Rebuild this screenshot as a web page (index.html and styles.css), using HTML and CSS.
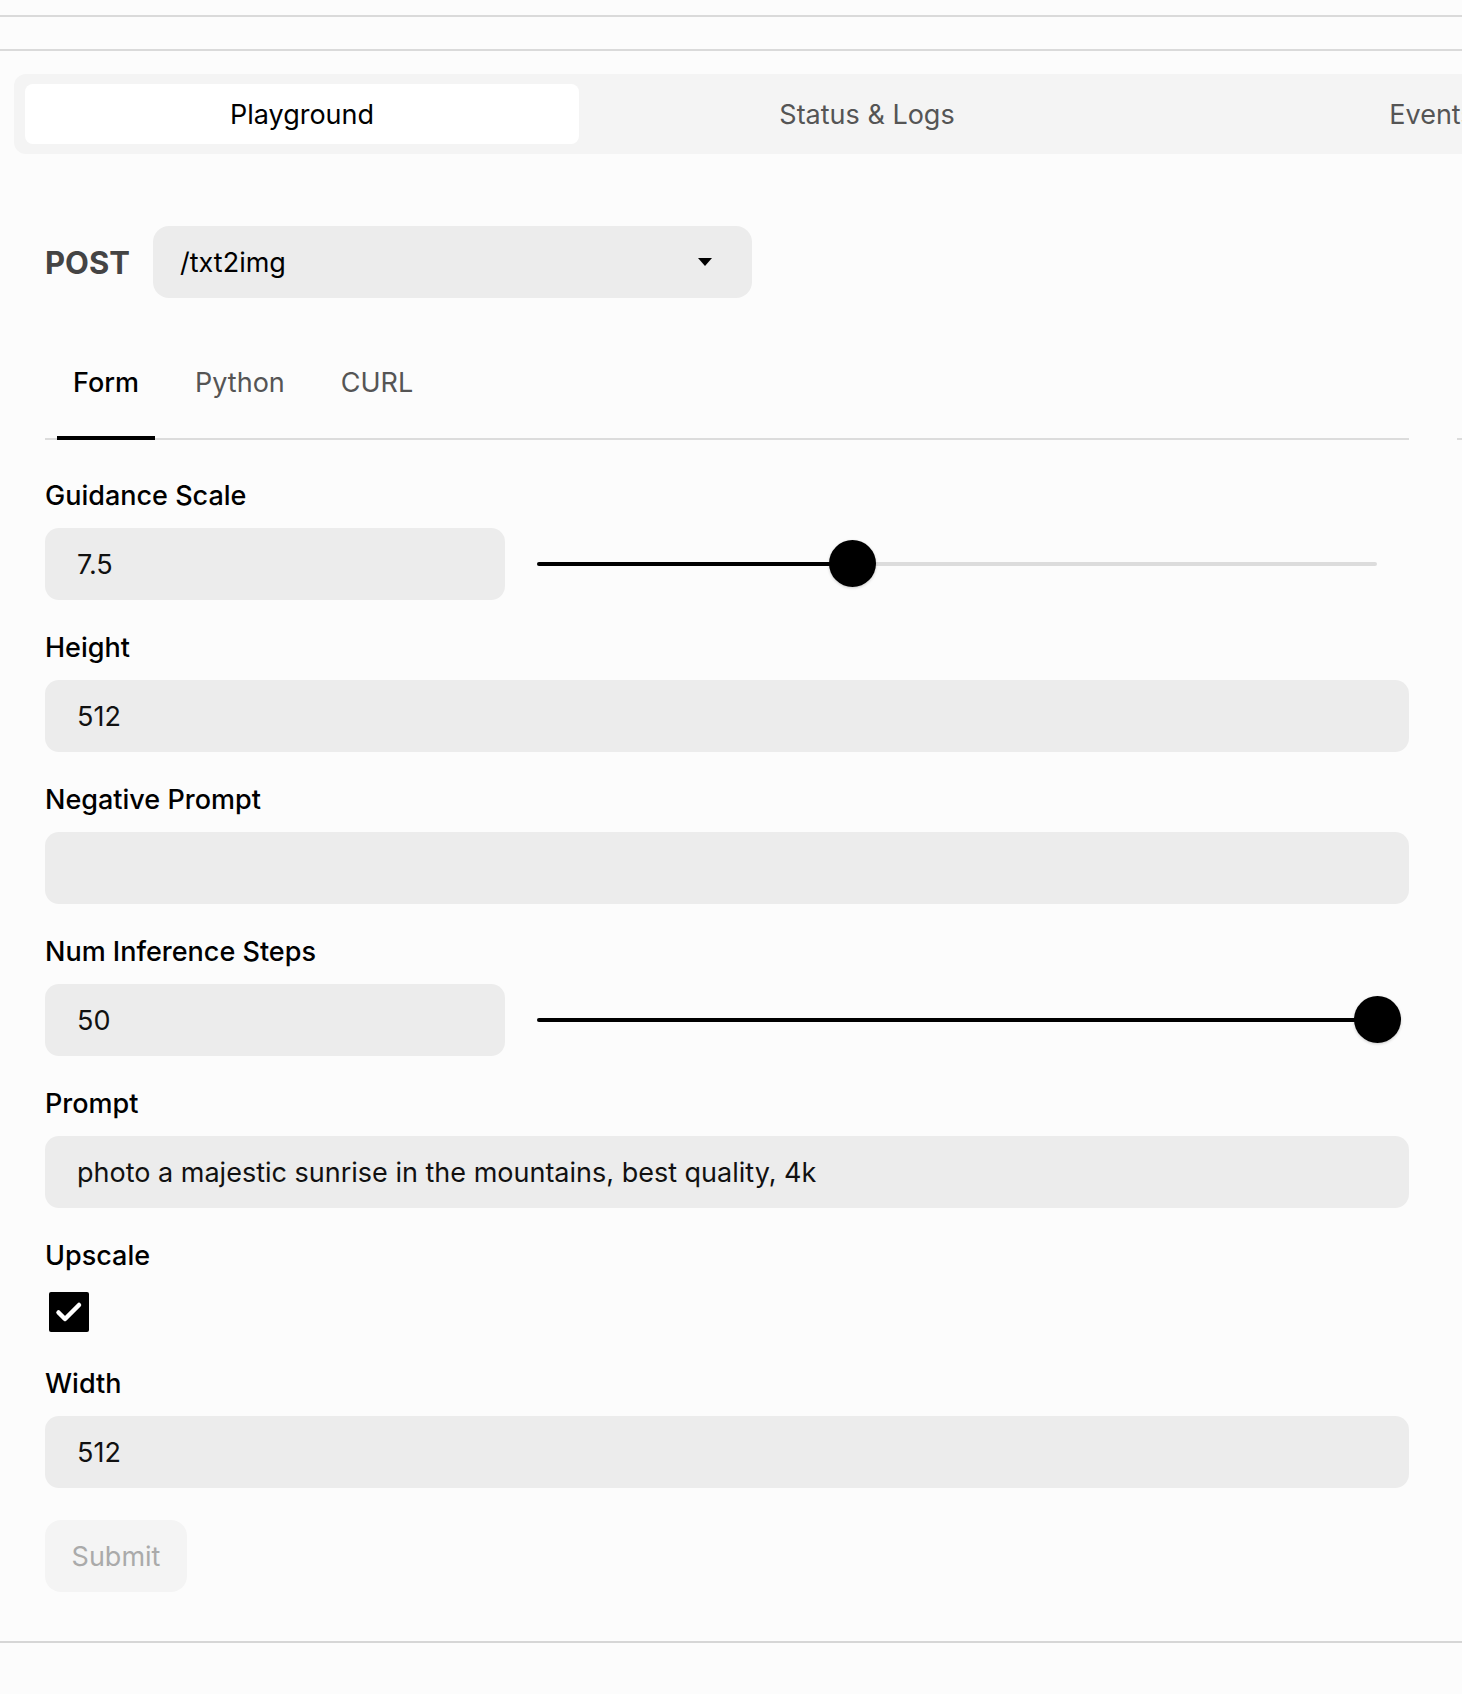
FILE: index.html
```html
<!DOCTYPE html>
<html lang="en">
<head>
<meta charset="utf-8">
<title>Playground</title>
<link rel="stylesheet" href="styles.css">
</head>
<body>
<div class="rule-top"></div>
<div class="rule-head"></div>
<div class="tabbar">
  <div class="tab active">Playground</div>
  <div class="tab">Status &amp; Logs</div>
  <div class="tab">Events</div>
</div>
<div class="columns">
  <div class="left">
    <div class="endpoint">
      <span class="method">POST</span>
      <div class="select"><span>/txt2img</span><span class="caret"></span></div>
    </div>
    <div class="subtabs">
      <div class="subtab active">Form</div>
      <div class="subtab">Python</div>
      <div class="subtab">CURL</div>
    </div>
    <div class="form">
      <div class="field">
        <div class="label">Guidance Scale</div>
        <div class="row">
          <div class="input half">7.5</div>
          <div class="slider">
            <div class="track"><div class="fill" style="width:37.5%"></div></div>
            <div class="thumb" style="left:37.5%"></div>
          </div>
        </div>
      </div>
      <div class="field">
        <div class="label">Height</div>
        <div class="input">512</div>
      </div>
      <div class="field">
        <div class="label">Negative Prompt</div>
        <div class="input"></div>
      </div>
      <div class="field">
        <div class="label">Num Inference Steps</div>
        <div class="row">
          <div class="input half">50</div>
          <div class="slider">
            <div class="track"><div class="fill" style="width:100%"></div></div>
            <div class="thumb" style="left:100%"></div>
          </div>
        </div>
      </div>
      <div class="field">
        <div class="label">Prompt</div>
        <div class="input">photo a majestic sunrise in the mountains, best quality, 4k</div>
      </div>
      <div class="field">
        <div class="label">Upscale</div>
        <div class="checkbox">
          <svg width="40" height="40" viewBox="0 0 40 40"><path d="M9.5 20.5 L16 27 L30 13" fill="none" stroke="#fff" stroke-width="4.5" stroke-linecap="round" stroke-linejoin="round"/></svg>
        </div>
      </div>
      <div class="field">
        <div class="label">Width</div>
        <div class="input">512</div>
      </div>
      <div class="submit">Submit</div>
    </div>
  </div>
  <div class="right">
    <div class="right-rule"></div>
  </div>
</div>
<div class="rule-bottom"></div>
</body>
</html>
```
FILE: styles.css
```css
html, body {
  margin: 0;
  padding: 0;
  overflow-x: hidden;
}
body {
  background: #fcfcfc;
  font-family: Inter, "Noto Sans", "Liberation Sans", sans-serif;
  color: #000;
  width: 1462px;
  min-height: 1694px;
}
.rule-top {
  height: 15px;
  border-bottom: 2px solid #dadada;
}
.rule-head {
  height: 32px;
  border-bottom: 2px solid #dadada;
}
.tabbar {
  margin: 23px 0 0 14px;
  width: 1706px;
  height: 80px;
  box-sizing: border-box;
  padding: 10px 11px;
  background: #f4f4f4;
  border-radius: 12px;
  display: grid;
  grid-template-columns: repeat(3, 1fr);
  gap: 11px;
}
.tab {
  display: flex;
  align-items: center;
  justify-content: center;
  font-size: 27px;
  color: #555;
  border-radius: 8px;
}
.tab.active {
  background: #fff;
  color: #000;
}
.columns {
  display: flex;
  gap: 48px;
  padding-left: 45px;
}
.left {
  width: 1364px;
  flex: none;
}
.right {
  flex: none;
  width: 600px;
  padding-top: 284px;
}
.right-rule {
  border-bottom: 2px solid #dcdcdc;
}
.endpoint {
  margin-top: 72px;
  display: flex;
  align-items: center;
  gap: 20px;
}
.method {
  font-size: 31px;
  font-weight: 700;
  color: #444;
  width: 88px;
}
.select {
  width: 599px;
  height: 72px;
  box-sizing: border-box;
  background: #ececec;
  border-radius: 16px;
  display: flex;
  align-items: center;
  justify-content: space-between;
  padding: 0 40px 0 27px;
  font-size: 27px;
}
.caret {
  width: 0;
  height: 0;
  border-left: 7px solid transparent;
  border-right: 7px solid transparent;
  border-top: 8px solid #000;
}
.subtabs {
  margin-top: 30px;
  display: flex;
  gap: 24px;
  border-bottom: 2px solid #dcdcdc;
  padding-left: 12px;
}
.subtab {
  font-size: 27px;
  line-height: 32px;
  padding: 39px 16px 39px;
  color: #555;
  margin-bottom: -2px;
  border-bottom: 4px solid transparent;
  box-sizing: border-box;
  height: 112px;
}
.subtab.active {
  color: #000;
  font-weight: 500;
  border-bottom-color: #000;
}
.form {
  padding-top: 40px;
  padding-bottom: 49px;
  display: flex;
  flex-direction: column;
  gap: 32px;
}
.field {
  display: flex;
  flex-direction: column;
}
.label {
  font-size: 27px;
  line-height: 32px;
  font-weight: 500;
  margin-bottom: 16px;
}
.row {
  display: flex;
  align-items: center;
  gap: 32px;
}
.input {
  height: 72px;
  box-sizing: border-box;
  background: #ececec;
  border-radius: 14px;
  padding: 0 32px;
  display: flex;
  align-items: center;
  font-size: 27px;
  color: #111;
}
.input.half {
  width: 460px;
  flex: none;
}
.slider {
  position: relative;
  flex: 1;
  height: 48px;
  margin-right: 32px;
  display: flex;
  align-items: center;
}
.track {
  width: 100%;
  height: 4px;
  background: #dcdcdc;
  border-radius: 2px;
}
.fill {
  height: 100%;
  background: #000;
  border-radius: 2px;
}
.thumb {
  position: absolute;
  top: 0;
  width: 47px;
  height: 47px;
  margin-left: -23.5px;
  border-radius: 50%;
  background: #000;
  box-shadow: 0 1px 3px rgba(0,0,0,0.2);
}
.checkbox {
  align-self: flex-start;
  width: 40px;
  height: 40px;
  margin: 4px 0 4px 4px;
  background: #000;
  border-radius: 2px;
}
.checkbox svg {
  display: block;
}
.submit {
  align-self: flex-start;
  width: 142px;
  height: 72px;
  box-sizing: border-box;
  background: #f4f4f4;
  border-radius: 16px;
  color: #aaa;
  font-size: 27px;
  display: flex;
  align-items: center;
  justify-content: center;
}
.rule-bottom {
  border-bottom: 2px solid #d6d6d6;
}
```
